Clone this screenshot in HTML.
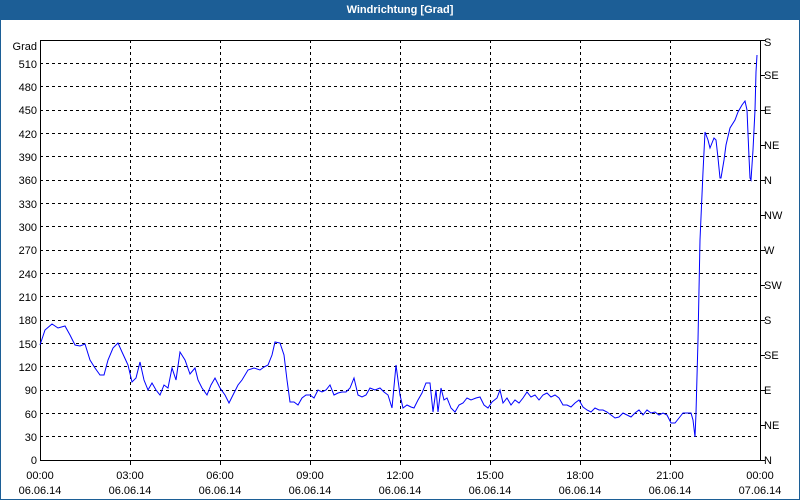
<!DOCTYPE html>
<html><head><style>
html,body{margin:0;padding:0;background:#fff;}
body{width:800px;height:500px;overflow:hidden;position:relative;font-family:"Liberation Sans",sans-serif;}
.title{position:absolute;left:0;top:0;width:800px;height:20px;background:#1c5e96;color:#fff;font-weight:bold;font-size:11px;text-align:center;line-height:20px;}
.frame{position:absolute;left:0;top:20px;width:798px;height:479px;border:1px solid #1c5e96;border-top:none;}
</style></head><body>
<div class="title">Windrichtung [Grad]</div>
<div class="frame"></div>
<svg width="800" height="500" style="position:absolute;left:0;top:0" font-family="Liberation Sans, sans-serif" font-size="11" fill="#000">
<g stroke="#000" stroke-width="1" stroke-dasharray="3,3" shape-rendering="crispEdges">
<line x1="40" x2="760" y1="63.5" y2="63.5"/><line x1="40" x2="760" y1="86.5" y2="86.5"/><line x1="40" x2="760" y1="110.5" y2="110.5"/><line x1="40" x2="760" y1="133.5" y2="133.5"/><line x1="40" x2="760" y1="156.5" y2="156.5"/><line x1="40" x2="760" y1="180.5" y2="180.5"/><line x1="40" x2="760" y1="203.5" y2="203.5"/><line x1="40" x2="760" y1="226.5" y2="226.5"/><line x1="40" x2="760" y1="250.5" y2="250.5"/><line x1="40" x2="760" y1="273.5" y2="273.5"/><line x1="40" x2="760" y1="296.5" y2="296.5"/><line x1="40" x2="760" y1="320.5" y2="320.5"/><line x1="40" x2="760" y1="343.5" y2="343.5"/><line x1="40" x2="760" y1="366.5" y2="366.5"/><line x1="40" x2="760" y1="390.5" y2="390.5"/><line x1="40" x2="760" y1="413.5" y2="413.5"/><line x1="40" x2="760" y1="436.5" y2="436.5"/>
<line x1="130.5" x2="130.5" y1="40" y2="460"/><line x1="220.5" x2="220.5" y1="40" y2="460"/><line x1="310.5" x2="310.5" y1="40" y2="460"/><line x1="400.5" x2="400.5" y1="40" y2="460"/><line x1="490.5" x2="490.5" y1="40" y2="460"/><line x1="580.5" x2="580.5" y1="40" y2="460"/><line x1="670.5" x2="670.5" y1="40" y2="460"/>
</g>
<g stroke="#000" shape-rendering="crispEdges">
<rect x="40.5" y="40.5" width="720" height="420" fill="none"/>
<line x1="761" x2="765" y1="460.5" y2="460.5"/><line x1="761" x2="765" y1="425.5" y2="425.5"/><line x1="761" x2="765" y1="390.5" y2="390.5"/><line x1="761" x2="765" y1="355.5" y2="355.5"/><line x1="761" x2="765" y1="320.5" y2="320.5"/><line x1="761" x2="765" y1="285.5" y2="285.5"/><line x1="761" x2="765" y1="250.5" y2="250.5"/><line x1="761" x2="765" y1="215.5" y2="215.5"/><line x1="761" x2="765" y1="180.5" y2="180.5"/><line x1="761" x2="765" y1="145.5" y2="145.5"/><line x1="761" x2="765" y1="110.5" y2="110.5"/><line x1="761" x2="765" y1="75.5" y2="75.5"/><line x1="761" x2="765" y1="40.5" y2="40.5"/>
<line x1="130.5" x2="130.5" y1="461" y2="465"/><line x1="220.5" x2="220.5" y1="461" y2="465"/><line x1="310.5" x2="310.5" y1="461" y2="465"/><line x1="400.5" x2="400.5" y1="461" y2="465"/><line x1="490.5" x2="490.5" y1="461" y2="465"/><line x1="580.5" x2="580.5" y1="461" y2="465"/><line x1="670.5" x2="670.5" y1="461" y2="465"/>
</g>
<g text-anchor="end">
<text x="37" y="50">Grad</text>
<text x="37" y="68">510</text><text x="37" y="91">480</text><text x="37" y="114">450</text><text x="37" y="138">420</text><text x="37" y="161">390</text><text x="37" y="184">360</text><text x="37" y="208">330</text><text x="37" y="231">300</text><text x="37" y="254">270</text><text x="37" y="278">240</text><text x="37" y="301">210</text><text x="37" y="324">180</text><text x="37" y="348">150</text><text x="37" y="371">120</text><text x="37" y="394">90</text><text x="37" y="418">60</text><text x="37" y="441">30</text><text x="37" y="464">0</text>
</g>
<g>
<text x="764" y="464">N</text><text x="764" y="429">NE</text><text x="764" y="394">E</text><text x="764" y="359">SE</text><text x="764" y="324">S</text><text x="764" y="289">SW</text><text x="764" y="254">W</text><text x="764" y="219">NW</text><text x="764" y="184">N</text><text x="764" y="149">NE</text><text x="764" y="114">E</text><text x="764" y="79">SE</text><text x="764" y="46">S</text>
</g>
<g text-anchor="middle">
<text x="40" y="479">00:00</text><text x="40" y="494">06.06.14</text>
<text x="130" y="479">03:00</text><text x="130" y="494">06.06.14</text>
<text x="220" y="479">06:00</text><text x="220" y="494">06.06.14</text>
<text x="310" y="479">09:00</text><text x="310" y="494">06.06.14</text>
<text x="400" y="479">12:00</text><text x="400" y="494">06.06.14</text>
<text x="490" y="479">15:00</text><text x="490" y="494">06.06.14</text>
<text x="580" y="479">18:00</text><text x="580" y="494">06.06.14</text>
<text x="670" y="479">21:00</text><text x="670" y="494">06.06.14</text>
<text x="760" y="479">00:00</text><text x="760" y="494">07.06.14</text>
</g>
<polyline fill="none" stroke="#0000ff" stroke-width="1" points="40,345 45,330 52,324 58,328 65,326 70,335 75,345 80,346 85,344 90,360 95,368 100,375 104,375 108,360 113,348 118,343 122,352 128,365 132,382 136,378 140,362 144,380 148,390 152,383 156,390 160,395 164,385 168,388 172,368 176,380 180,352 185,360 190,374 195,368 198,380 202,388 207,395 211,385 215,378 220,388 225,395 229,403 233,395 238,385 242,380 248,370 254,368 260,370 264,367 268,365 272,355 275,342 280,343 284,355 287,380 290,402 294,402 298,405 302,398 306,395 310,395 314,398 318,390 322,392 326,390 330,385 334,395 338,393 342,392 346,392 350,388 354,378 358,395 362,397 366,395 370,388 375,390 380,388 384,392 388,395 392,408 396,365 400,395 403,408 407,405 411,407 414,408 418,400 422,393 426,383 430,383 433,412 436,390 438,412 441,388 444,400 447,398 451,408 455,412 459,405 463,403 467,398 471,400 476,398 480,397 484,405 488,408 492,402 497,398 500,390 503,403 507,398 511,405 515,400 519,403 523,398 527,392 531,397 535,395 539,400 543,395 547,393 551,397 555,395 559,398 563,405 567,405 571,407 575,403 579,400 583,407 587,410 591,412 595,408 599,410 603,410 607,412 611,415 615,418 619,417 623,413 627,415 631,417 635,413 639,410 643,415 647,410 651,413 655,412 659,415 663,413 667,415 671,423 675,423 679,418 683,413 687,413 691,413 693,420 695,437 696,413 698,340 700,240 703,172 705,132 708,140 710,148 714,138 716,140 718,158 720,178 721,178 724,160 726,145 730,128 735,120 738,112 742,105 745,101 747,110 749,157 750,178 751,180 753,150 755,110 756,72 757,55"/>
</svg>
</body></html>
